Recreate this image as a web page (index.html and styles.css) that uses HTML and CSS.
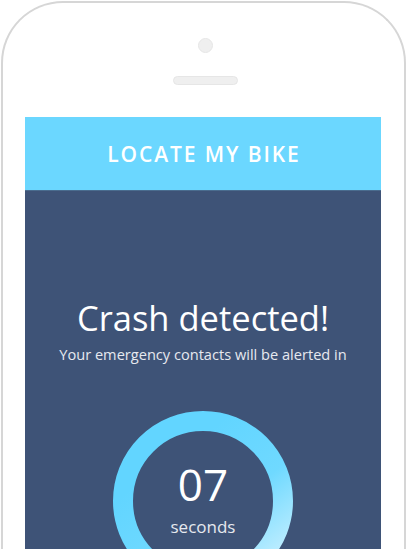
FILE: index.html
```html
<!DOCTYPE html>
<html>
<head>
<meta charset="utf-8">
<link rel="stylesheet" href="styles.css">
</head>
<body>
<div class="phone">
  <div class="camera"></div>
  <div class="speaker"></div>
  <div class="screen">
    <header class="topbar">LOCATE MY BIKE</header>
    <main class="content">
      <h1 class="title">Crash detected!</h1>
      <p class="subtitle">Your emergency contacts will be alerted in</p>
      <div class="timer">
        <svg class="ring" width="180" height="180" viewBox="0 0 180 180">
          <defs>
            <linearGradient id="rg" x1="0.35" y1="0.2" x2="0.95" y2="1">
              <stop offset="0" stop-color="#62d5ff"/>
              <stop offset="0.45" stop-color="#6fd9ff"/>
              <stop offset="1" stop-color="#d4f3ff"/>
            </linearGradient>
          </defs>
          <circle cx="90" cy="90" r="80" fill="none" stroke="url(#rg)" stroke-width="20"/>
        </svg>
        <div class="count">07</div>
        <div class="unit">seconds</div>
      </div>
    </main>
  </div>
</div>
</body>
</html>
```
FILE: styles.css
```css
html, body {
  margin: 0;
  padding: 0;
  background: #ffffff;
  overflow: hidden;
}
body {
  width: 407px;
  height: 549px;
}
.phone {
  box-sizing: border-box;
  margin: 1px 0 0 1px;
  width: 405px;
  height: 548px;
  border: 2px solid #d6d6d6;
  border-bottom: none;
  border-radius: 62px 62px 0 0;
  display: flex;
  flex-direction: column;
  align-items: center;
  padding-top: 35px;
  overflow: hidden;
}
.camera {
  flex: none;
  width: 13px;
  height: 13px;
  border-radius: 50%;
  background: #efefef;
  border: 1px solid #e6e6e6;
  margin-left: 4px;
}
.speaker {
  flex: none;
  box-sizing: border-box;
  width: 65px;
  height: 9px;
  border-radius: 5px;
  background: #efefef;
  border: 1px solid #e6e6e6;
  margin-top: 23px;
  margin-left: 4px;
}
.screen {
  margin-top: 32px;
  width: 356px;
  align-self: flex-start;
  margin-left: 22px;
  flex: 1 1 0;
  min-height: 0;
  overflow: hidden;
  background: #3e5377;
  display: flex;
  flex-direction: column;
}
.topbar {
  flex: none;
  height: 73px;
  background: #6bd7ff;
  border-bottom: 1px solid #4a6c8e;
  color: #ffffff;
  font-family: "Open Sans", sans-serif;
  font-size: 21px;
  font-weight: 600;
  letter-spacing: 1.9px;
  display: flex;
  align-items: center;
  justify-content: center;
  padding-left: 2px;
}
.content {
  flex: none;
  display: flex;
  flex-direction: column;
  align-items: center;
  color: #ffffff;
  font-family: "Open Sans", sans-serif;
}
.title {
  margin: 107px 0 0 0;
  font-size: 34.5px;
  font-weight: 400;
  line-height: 40px;
  letter-spacing: 0;
}
.subtitle {
  margin: 7px 0 0 0;
  font-size: 14.6px;
  line-height: 18px;
  color: #e6e9ef;
}
.timer {
  position: relative;
  margin-top: 48px;
  width: 180px;
  height: 180px;
  flex: none;
  display: flex;
  flex-direction: column;
  align-items: center;
}
.ring {
  position: absolute;
  left: 0;
  top: 0;
}
.count {
  margin-top: 47px;
  font-size: 44px;
  line-height: 52px;
  font-weight: 400;
}
.unit {
  margin-top: 6px;
  font-size: 17px;
  line-height: 22px;
  color: #e6e9ef;
}
```
